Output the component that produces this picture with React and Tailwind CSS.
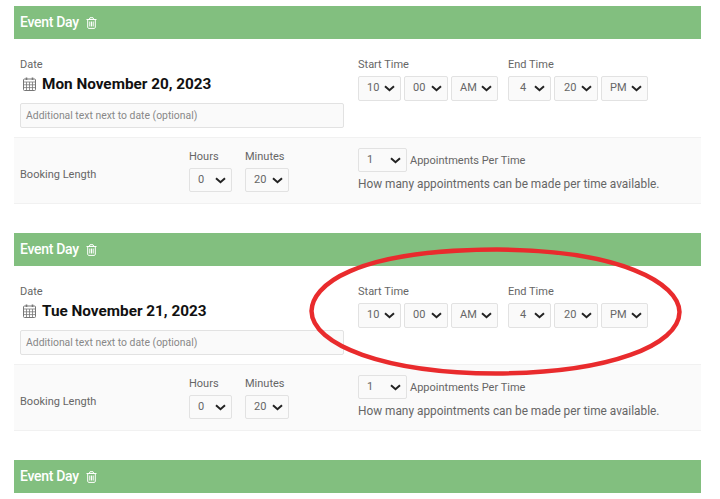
import React from "react";

const Chevron = () => (
  <svg width="11" height="7" viewBox="0 0 11 7" className="shrink-0">
    <path d="M1 1.3 L5.5 5.2 L10 1.3" fill="none" stroke="#222" strokeWidth="2" />
  </svg>
);

const Sel = ({ value, w, pl, h = "h-[25px]" }) => (
  <div
    className={`flex items-center justify-between rounded-[2px] border border-[#e2e2e2] bg-[#fafafa] pr-[5px] text-[11px] text-[#666] ${h} ${w} ${pl}`}
  >
    <span>{value}</span>
    <Chevron />
  </div>
);

const Trash = () => (
  <svg width="11" height="12" viewBox="0 0 11 12" fill="none" stroke="#fff" strokeWidth="1" className="ml-[7px]">
    <path d="M0.5 2.5H10.5M3.2 2.5L4 0.7H7L7.8 2.5" />
    <path d="M1.7 2.5V10.2C1.7 10.9 2.1 11.4 2.7 11.4H8.3C8.9 11.4 9.3 10.9 9.3 10.2V2.5" />
    <path d="M3.8 4.5V9.5M5.5 4.5V9.5M7.2 4.5V9.5" />
  </svg>
);

const Calendar = () => (
  <svg width="13" height="14" viewBox="0 0 13 14" fill="none" stroke="#777" strokeWidth="1" className="mr-[6px] shrink-0">
    <rect x="0.5" y="2" width="12" height="11.5" rx="1" />
    <path d="M0.5 5H12.5M0.5 7.8H12.5M0.5 10.6H12.5M3.5 5V13.5M6.5 5V13.5M9.5 5V13.5" strokeWidth="0.8" />
    <path d="M3.5 0.5V3M9.5 0.5V3" strokeWidth="1.6" />
  </svg>
);

const Header = () => (
  <div className="flex h-[33px] items-center bg-[#82bf7f] pl-[6px] text-[14px] font-medium tracking-[-0.3px] text-white">
    <span>Event Day</span>
    <Trash />
  </div>
);

const Label = ({ children, className = "" }) => (
  <div className={`text-[11px] leading-[14px] text-[#666] ${className}`}>{children}</div>
);

const EventDay = ({ date }) => (
  <section>
    <Header />
    <div className="flex h-[99px] border-b border-[#f1f1f1]">
      <div className="w-[344px] shrink-0 pt-[19px] pl-[6px]">
        <Label>Date</Label>
        <div className="mt-[2px] flex h-[20px] items-center pl-[3px] text-[15.3px] font-bold text-[#111]">
          <Calendar />
          <span>{date}</span>
        </div>
        <div className="mt-[9px] flex h-[25px] w-[324px] items-center rounded-[2px] border border-[#e2e2e2] bg-[#fafafa] pl-[5px] text-[10.4px] text-[#888]">
          Additional text next to date (optional)
        </div>
      </div>
      <div className="pt-[19px]">
        <div className="flex gap-[10px]">
          <div>
            <Label>Start Time</Label>
            <div className="mt-[4px] flex gap-[3px]">
              <Sel value="10" w="w-[43px]" pl="pl-[8px]" />
              <Sel value="00" w="w-[44px]" pl="pl-[8px]" />
              <Sel value="AM" w="w-[47px]" pl="pl-[8px]" />
            </div>
          </div>
          <div>
            <Label>End Time</Label>
            <div className="mt-[4px] flex gap-[3px]">
              <Sel value="4" w="w-[43px]" pl="pl-[11px]" />
              <Sel value="20" w="w-[44px]" pl="pl-[9px]" />
              <Sel value="PM" w="w-[47px]" pl="pl-[8px]" />
            </div>
          </div>
        </div>
      </div>
    </div>
    <div className="flex h-[66px] border-b border-[#f1f1f1] bg-[#fafafa]">
      <div className="flex w-[175px] shrink-0 items-center pl-[6px] pt-[8px]">
        <Label>Booking Length</Label>
      </div>
      <div className="flex w-[169px] shrink-0 gap-[13px] pt-[12px]">
        <div>
          <Label>Hours</Label>
          <div className="mt-[4px]"><Sel value="0" w="w-[43px]" pl="pl-[8px]" h="h-[24px]" /></div>
        </div>
        <div>
          <Label>Minutes</Label>
          <div className="mt-[4px]"><Sel value="20" w="w-[44px]" pl="pl-[8px]" h="h-[24px]" /></div>
        </div>
      </div>
      <div className="pt-[10px]">
        <div className="flex items-center gap-[3px]">
          <Sel value="1" w="w-[49px]" pl="pl-[8px]" h="h-[24px]" />
          <Label className="pt-[1px]">Appointments Per Time</Label>
        </div>
        <div className="mt-[5px] text-[11.85px] leading-[14px] text-[#666]">
          How many appointments can be made per time available.
        </div>
      </div>
    </div>
  </section>
);

export default function App() {
  return (
    <div className="relative h-[499px] w-[720px] overflow-hidden bg-white pt-[6px] pl-[14px] pr-[19px] font-['Roboto',sans-serif]">
      <div className="flex flex-col gap-[29px]">
        <EventDay date="Mon November 20, 2023" />
        <EventDay date="Tue November 21, 2023" />
        <Header />
      </div>
      <svg className="absolute left-0 top-0" width="720" height="499" viewBox="0 0 720 499" fill="none">
        <path
          d="M311.5 311C312 286 352 250 497 249.5C620 250 679 283 679.5 312C679 345 610 373 496 373.5C385 373 312 345 311.5 311Z"
          stroke="#e92b2d"
          strokeWidth="4.5"
        />
      </svg>
    </div>
  );
}
